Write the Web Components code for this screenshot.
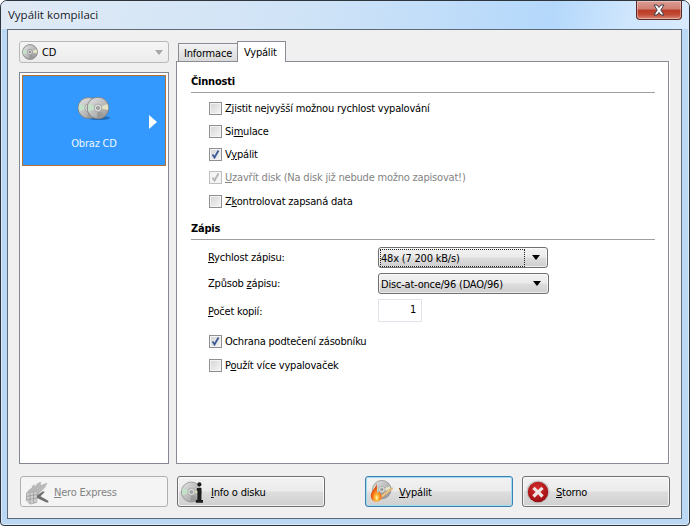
<!DOCTYPE html>
<html lang="cs">
<head>
<meta charset="utf-8">
<title>Vypálit kompilaci</title>
<style>
  html, body { margin: 0; padding: 0; background: #fff; }
  body { font: 11px "DejaVu Sans Condensed", "Liberation Sans", sans-serif; letter-spacing: -.2px; color: #000; }
  u { text-underline-offset: 1px; }
</style>
</head>
<body>
<nero-dialog heading="Vypálit kompilaci">
  <nero-combo slot="source"><nero-icon name="cd" size="16" slot="icon"></nero-icon><span>CD</span></nero-combo>
  <nero-list slot="source">
    <nero-item>Obraz CD</nero-item>
  </nero-list>

  <nero-tabs slot="main">
    <nero-tab slot="tabs">Informace</nero-tab>
    <nero-tab slot="tabs" selected>Vypálit</nero-tab>

    <nero-section heading="Činnosti">
      <nero-check>Z<u>j</u>istit nejvyšší možnou rychlost vypalování</nero-check>
      <nero-check>Si<u>m</u>ulace</nero-check>
      <nero-check checked>V<u>y</u>pálit</nero-check>
      <nero-check checked disabled><u>U</u>zavřít disk (Na disk již nebude možno zapisovat!)</nero-check>
      <nero-check style="margin-top:1px">Z<u>k</u>ontrolovat zapsaná data</nero-check>
    </nero-section>

    <nero-section heading="Zápis">
      <nero-form>
        <span><u>R</u>ychlost zápisu:</span>
        <nero-select focused style="width:170px">48x (7 200 kB/s)</nero-select>
        <span>Způsob <u>z</u>ápisu:</span>
        <nero-select style="width:171px">Disc-at-once/96 (DAO/96)</nero-select>
        <span style="padding-top:1px"><u>P</u>očet kopií:</span>
        <nero-spin>1</nero-spin>
      </nero-form>
      <nero-check checked style="margin-top:8px">Ochrana podtečení zásobníku</nero-check>
      <nero-check style="margin-top:1px">P<u>o</u>užít více vypalovaček</nero-check>
    </nero-section>
  </nero-tabs>

  <nero-button slot="footer" disabled><nero-icon name="express" size="26" slot="icon"></nero-icon><u>N</u>ero Express</nero-button>
  <nero-button slot="footer"><nero-icon name="info" size="24" slot="icon"></nero-icon><u>I</u>nfo o disku</nero-button>
  <nero-button slot="footer" default style="margin-left:31px"><nero-icon name="burn" size="24" slot="icon"></nero-icon><u>V</u>ypálit</nero-button>
  <nero-button slot="footer"><nero-icon name="cancel" size="24" slot="icon"></nero-icon><u>S</u>torno</nero-button>
</nero-dialog>

<script>
function define(name, html) {
  customElements.define(name, class extends HTMLElement {
    constructor() {
      super();
      this.attachShadow({ mode: "open" });
      this.shadowRoot.innerHTML = typeof html === "function" ? html(this) : html;
    }
  });
}

const discDefs = `
  <defs>
    <linearGradient id="silver" x1="0" y1="0" x2="1" y2="1">
      <stop offset="0" stop-color="#e6e6e6"/><stop offset=".5" stop-color="#bdbdbd"/><stop offset="1" stop-color="#929292"/>
    </linearGradient>
  </defs>`;

// one silver disc with the green and yellow sheen on it
function disc(cx, cy, r) {
  const p = (a, k) => (cx + Math.cos(a) * r * k).toFixed(1) + " " + (cy + Math.sin(a) * r * k).toFixed(1);
  const wedge = (a, b, c) => `<path d="M${p(a, .35)}L${p(a, .95)}A${r * .95} ${r * .95} 0 0 1 ${p(b, .95)}L${p(b, .35)}Z" fill="${c}"/>`;
  return `<circle cx="${cx}" cy="${cy}" r="${r}" fill="url(#silver)" stroke="#7a7a7a" stroke-width=".8"/>
    ${wedge(2.8, 3.6, "#c3e2c8")}${wedge(-.4, .2, "#e6e4c4")}${wedge(.9, 1.7, "#9a9a9a")}
    <circle cx="${cx}" cy="${cy}" r="${r * .36}" fill="#dedede" stroke="#8a8a8a" stroke-width=".6"/>
    <circle cx="${cx}" cy="${cy}" r="${r * .15}" fill="#a8a8a8" stroke="#707070" stroke-width=".5"/>`;
}

const icons = {
  cd: () => `<svg viewBox="0 0 16 16">${discDefs}${disc(8, 8, 7.4)}</svg>`,
  pair: () => `<svg viewBox="0 0 34 24">${discDefs}
    <ellipse cx="22" cy="21" rx="11" ry="2" fill="#1c5a9a" opacity=".7"/>
    ${disc(11.5, 11, 10.5)}${disc(21, 11, 10.8)}</svg>`,
  info: () => `<svg viewBox="0 0 30 30">${discDefs}${disc(13, 15, 12.5)}
    <circle cx="23" cy="5.5" r="2.6" fill="#1d1d1d"/>
    <path d="M20 10h5.5v15h2v3.5h-9V25h2V13.5h-1z" fill="#1d1d1d"/></svg>`,
  burn: () => `<svg viewBox="0 0 30 30">${discDefs}
    <defs><radialGradient id="flame" cx=".55" cy=".78" r=".65">
      <stop offset="0" stop-color="#fff8c8"/><stop offset=".28" stop-color="#ffb52e"/><stop offset=".6" stop-color="#f4701a"/><stop offset="1" stop-color="#d2320f"/>
    </radialGradient></defs>
    ${disc(16, 12, 11.5)}
    <path d="M12 21L29 9.5l1 1.5L14 24z" fill="#f0c78b" stroke="#b98d52" stroke-width=".5"/>
    <path d="M8.5 4c1 4-1 5-3 8s-4 6-3 10c1 4 5 6 8 5 4-1 6-4 5-8-.5-2-2-3-2.5-5-1 1.5-1.500 2.5-2.500 2.5C9.5 14 11 9 8.5 4z" fill="url(#flame)"/></svg>`,
  cancel: () => `<svg viewBox="0 0 30 30">
    <defs><radialGradient id="red" cx=".45" cy=".35" r=".75">
      <stop offset="0" stop-color="#d9302c"/><stop offset=".7" stop-color="#a81518"/><stop offset="1" stop-color="#7e0d10"/>
    </radialGradient></defs>
    <circle cx="15" cy="15" r="14.5" fill="#c9c9c9"/>
    <circle cx="15" cy="15" r="12.8" fill="url(#red)"/>
    <path d="M10.8 8.3L15 12.5l4.2-4.2 2.9 2.9-4.2 3.8 4.2 4.2-2.9 2.9L15 17.9l-4.2 4.2-2.9-2.9 4.2-4.2-4.2-3.8z" fill="#f0e6e6"/></svg>`,
  express: () => `<svg viewBox="0 0 30 30">
    <path d="M3 16c2-4 4-5 6-6 0-2 1-3 3-4 0 1 0 2 1 2 1-2 4-4 7-5-1 2-1 3 0 4 2-1 4-2 7-3-1 4-4 8-7 10l-5 6-4 6H7L2 24z" fill="#b9b9b9"/>
    <path d="M3 16l12-2v13l-8 2-4-4z" fill="#cfcfcf" stroke="#979797" stroke-width=".6"/>
    <path d="M3 20l12-2M3 24l12-2M7 15.5v13M11 15v13" stroke="#8c8c8c" stroke-width=".7" fill="none"/>
    <path d="M15 19l7-5 2 1-5 5 9 5v2h-2l-11-5z" fill="#6f6f6f"/></svg>`
};

class NeroIcon extends HTMLElement {
  constructor() {
    super();
    this.attachShadow({ mode: "open" });
  }
  connectedCallback() {
    const size = this.getAttribute("size");
    const width = this.getAttribute("width") || size;
    this.shadowRoot.innerHTML = `
      <style>
        :host { display: inline-block; flex: none; line-height: 0; width: ${width}px; height: ${size}px; margin-right: ${width > 24 && width < 30 ? 24 - width : 0}px; }
        svg { width: 100%; height: 100%; display: block; }
      </style>
      ${icons[this.getAttribute("name")]()}`;
  }
}
customElements.define("nero-icon", NeroIcon);

define("nero-dialog", (el) => `
  <style>
    :host {
      display: flex; flex-direction: column; box-sizing: border-box;
      width: 690px; height: 526px; overflow: hidden;
      border: 1px solid #2f353c; border-radius: 7px 7px 4px 4px;
      background: #bad7f3;
      box-shadow: inset 0 0 0 1px rgba(255,255,255,.45);
    }
    .bar {
      flex: none; display: flex; height: 28px; padding: 0 7px;
      background: linear-gradient(102deg, #dfeaf5 0, #cfe3f7 45%, #b4d8fb 80%, #cfe6fd 91%, #d8ebfe 100%);
    }
    .title {
      padding-top: 6px; font: 11.5px/16px "Open Sans", sans-serif; letter-spacing: 0; color: #16202c;
      text-shadow: 0 0 6px rgba(255,255,255,.9);
    }
    .close {
      margin-left: auto; width: 46px; height: 19px; box-sizing: border-box;
      display: flex; align-items: center; justify-content: center;
      border: 1px solid #5b2a26; border-top: 0; border-radius: 0 0 4px 4px;
      background: linear-gradient(#dc9c92 0, #cf7f72 45%, #b93b26 50%, #c14a35 75%, #d98a78 100%);
      box-shadow: inset 0 0 0 1px rgba(255,255,255,.35);
    }
    .client {
      flex: 1; min-height: 0; display: flex; flex-direction: column;
      margin: 0 7px 6px 6px; border: 1px solid #5d6b79; background: #f0f0f0;
      padding: 11px 12px 11px 11px;
    }
    .main { flex: 1; min-height: 0; display: flex; gap: 7px; }
    .side { flex: none; width: 150px; display: flex; flex-direction: column; gap: 9px; }
    .content { flex: 1; min-width: 0; display: flex; }
    .footer { flex: none; display: flex; gap: 9px; margin-top: 12px; padding-left: 1px; }
  </style>
  <div class="bar">
    <div class="title">${el.getAttribute("heading") || "Vypálit kompilaci"}</div>
    <div class="close">
      <svg width="16" height="12" viewBox="0 0 16 12">
        <path d="M3 1h3l2 2.5L10 1h3L9.8 6 13 11h-3L8 8.5 6 11H3l3.2-5z" fill="#fff" stroke="#3d3d46" stroke-width="1"/>
      </svg>
    </div>
  </div>
  <div class="client">
    <div class="main">
      <div class="side"><slot name="source"></slot></div>
      <div class="content"><slot name="main"></slot></div>
    </div>
    <div class="footer"><slot name="footer"></slot></div>
  </div>`);

define("nero-combo", `
  <style>
    :host {
      display: flex; align-items: center; gap: 4px; box-sizing: border-box;
      width: 150px; height: 22px; padding: 0 5px 0 2px;
      border: 1px solid #b9b9b9; border-radius: 3px;
      background: linear-gradient(#f5f5f5, #ececec);
    }
    ::slotted(span) { padding-top: 1px; }
    .arrow {
      margin-left: auto; width: 0; height: 0;
      border: 4px solid transparent; border-top: 5px solid #a6a6a6; border-bottom: 0;
    }
  </style>
  <slot name="icon"></slot><slot></slot><span class="arrow"></span>`);

define("nero-list", `
  <style>
    :host {
      flex: 1; min-height: 0; display: block; box-sizing: border-box;
      border: 1px solid #828790; background: #fff; padding: 2px 2px;
    }
  </style>
  <slot></slot>`);

define("nero-item", `
  <style>
    :host {
      display: flex; flex-direction: column; align-items: center; box-sizing: border-box;
      position: relative; height: 91px; padding-top: 21px;
      border: 1px solid #b8712b; background: #3399ff; color: #fff;
    }
    .label { margin-top: 15px; line-height: 16px; color: #eef6ff; }
    .arrow {
      position: absolute; top: 39px; right: 8px; width: 0; height: 0;
      border-left: 8px solid #fff; border-top: 7px solid transparent; border-bottom: 7px solid transparent;
    }
  </style>
  <nero-icon name="pair" size="24" width="34"></nero-icon>
  <div class="label"><slot></slot></div>
  <span class="arrow"></span>`);

define("nero-tabs", `
  <style>
    :host { flex: 1; min-width: 0; display: flex; flex-direction: column; }
    .strip { flex: none; display: flex; height: 20px; padding-left: 2px; position: relative; z-index: 1; }
    .panel {
      flex: 1; min-height: 0; box-sizing: border-box;
      border: 1px solid #898c95; background: #fff;
      padding: 0 13px 0 14px; box-shadow: 1px 0 0 #fff;
    }
  </style>
  <div class="strip"><slot name="tabs"></slot></div>
  <div class="panel"><slot></slot></div>`);

define("nero-tab", `
  <style>
    :host {
      display: flex; align-items: center; box-sizing: border-box;
      height: 18px; margin-top: 2px; width: 59px; padding: 1px 0 0 5px;
      border: 1px solid #898c95; border-bottom: 0; border-right: 0;
      background: linear-gradient(#f3f3f3, #dadada);
    }
    :host([selected]) {
      height: 21px; margin-top: 0; width: 49px; padding: 0 0 0 6px;
      border-right: 1px solid #898c95; background: #fff;
    }
  </style>
  <slot></slot>`);

define("nero-section", (el) => `
  <style>
    :host { display: block; }
    h2 {
      margin: 0 0 4px; padding: 13px 0 3px; font-size: 11px; line-height: 14px; font-weight: bold;
      border-bottom: 1px solid #a0a0a0;
    }
    :host(:not(:first-of-type)) h2 { padding-top: 9px; }
  </style>
  <h2>${el.getAttribute("heading")}</h2>
  <slot></slot>`);

define("nero-check", `
  <style>
    :host {
      display: flex; align-items: center; gap: 3px; height: 23px; margin-left: 18px;
    }
    :host([disabled]) { color: #838383; }
    .box {
      flex: none; width: 13px; height: 13px; box-sizing: border-box;
      border: 1px solid #8e8f8f; display: flex;
      background: linear-gradient(135deg, #d4d4d4, #f6f6f6);
      box-shadow: inset 0 0 0 1px #f4f4f4;
    }
    :host([disabled]) .box { border-color: #bdbdbd; background: #f4f4f4; }
    svg { display: none; width: 11px; height: 11px; }
    :host([checked]) svg { display: block; }
    :host([disabled]) path { stroke: #b3b3b3; }
    .text { margin-top: -1px; }
  </style>
  <span class="box"><svg viewBox="0 0 11 11"><path d="M2.5 5.5L4.5 8.5 8.5 1.5" fill="none" stroke="#3f5a97" stroke-width="1.8"/></svg></span>
  <span class="text"><slot></slot></span>`);

define("nero-form", `
  <style>
    :host {
      display: grid; grid-template-columns: 170px auto; justify-content: start;
      align-items: center; row-gap: 5px; margin: 7px 0 0 17px;
    }
  </style>
  <slot></slot>`);

define("nero-select", `
  <style>
    :host {
      display: flex; align-items: center; box-sizing: border-box; height: 21px;
      padding: 0 3px 0 2px; position: relative;
      border: 1px solid #707070; border-radius: 3px;
      background: linear-gradient(#f2f2f2 0, #ebebeb 48%, #dddddd 52%, #cfcfcf 100%);
      box-shadow: inset 0 0 0 1px rgba(255,255,255,.6);
    }
    .text { flex: 1; min-width: 0; line-height: 15px; padding-top: 1px; box-sizing: border-box; white-space: nowrap; }
    :host([focused]) .text { outline: 1px dotted #222; outline-offset: 0; }
    .arrow {
      margin: 0 4px 0 8px; width: 0; height: 0;
      border: 4px solid transparent; border-top: 5px solid #000; border-bottom: 0;
    }
  </style>
  <span class="text"><slot></slot></span><span class="arrow"></span>`);

define("nero-spin", `
  <style>
    :host {
      display: flex; align-items: center; justify-content: flex-end; box-sizing: border-box;
      width: 44px; height: 23px; padding: 0 5px 2px 0;
      border: 1px solid #e2e3ea; border-radius: 1px; background: #fff;
    }
  </style>
  <slot></slot>`);

define("nero-button", `
  <style>
    :host {
      display: flex; flex: none; align-items: center; box-sizing: border-box;
      width: 148px; height: 31px; padding-left: 3px; gap: 6px;
      border: 1px solid #707070; border-radius: 3px;
      background: linear-gradient(#f2f2f2 0, #ebebeb 48%, #dddddd 52%, #cfcfcf 100%);
      box-shadow: inset 0 0 0 1px rgba(255,255,255,.7);
    }
    :host([default]) {
      border-color: #3c7fb1;
      box-shadow: inset 0 0 0 1px #9fdcf3;
    }
    :host([disabled]) {
      border-color: #adb2b5; background: #f4f4f4; color: #838383;
      box-shadow: none;
    }
    .text { padding-top: 1px; }
  </style>
  <slot name="icon"></slot><span class="text"><slot></slot></span>`);
</script>
</body>
</html>
